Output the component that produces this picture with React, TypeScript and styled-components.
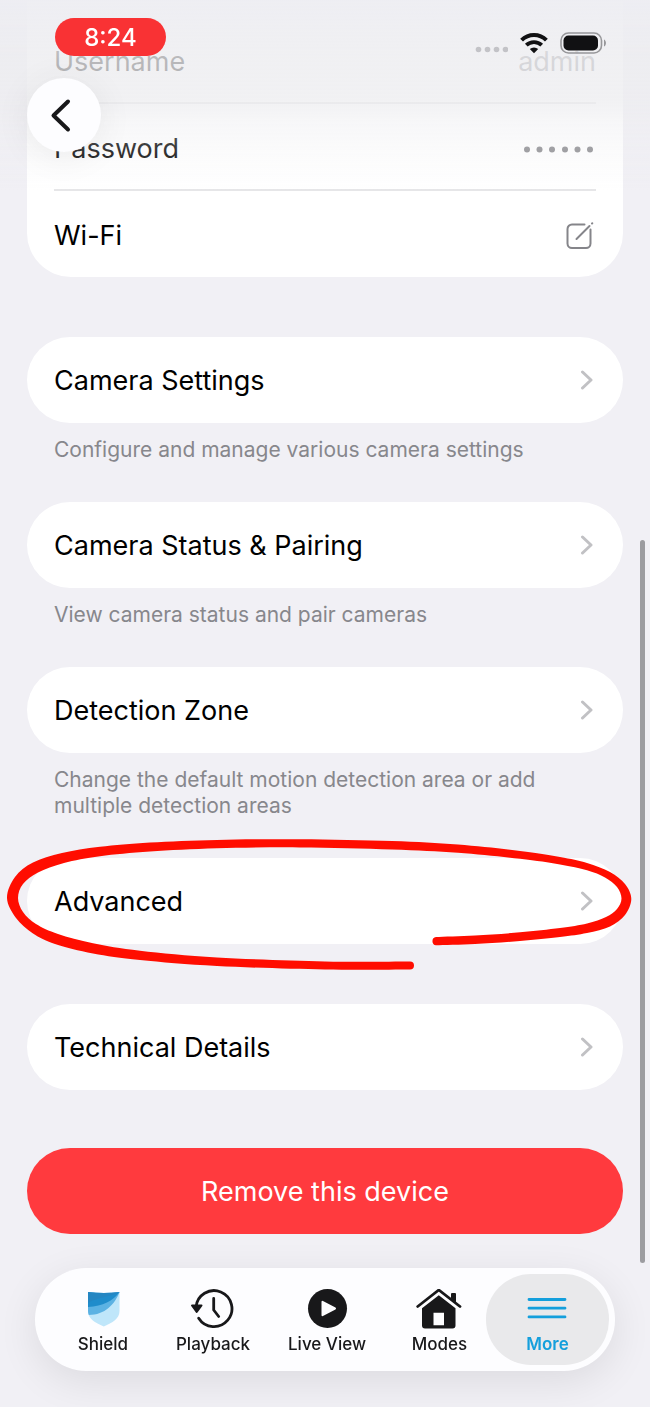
import React from "react";
import styled, { createGlobalStyle } from "styled-components";

const GlobalStyle = createGlobalStyle`
  *, *::before, *::after { box-sizing: border-box; }
  body {
    margin: 0;
    background: #f1f0f5;
    color: #000;
    font-family: Inter, "Liberation Sans", sans-serif;
  }
  a { color: inherit; text-decoration: none; }
  button { font: inherit; border: 0; cursor: pointer; }
`;

const Screen = styled.div`
  position: relative;
  overflow: hidden;
  padding: 0 27px 173px;
`;

const Settings = styled.main`
  display: flex;
  flex-direction: column;
`;

const Card = styled.section`
  background: #fff;
  border-radius: 0 0 44px 44px;
  padding: 17px 27px 0;
  margin-bottom: 60px;
`;

const Row = styled.div<{ $divided?: boolean }>`
  display: flex;
  align-items: center;
  justify-content: space-between;
  height: ${(p) => (p.$divided ? 87 : 86)}px;
  padding-top: 4px;
  border-bottom: ${(p) => (p.$divided ? "2px solid #e6e6e8" : "0")};
  font-size: 27px;
  line-height: 36px;
`;

const Value = styled.span`
  display: flex;
  color: #8a8a8e;
`;

const EditButton = styled.button`
  display: flex;
  padding: 0;
  background: none;
`;

const Item = styled.section<{ $gap: number }>`
  position: relative;
  margin-bottom: ${(p) => p.$gap}px;
`;

const ItemLink = styled.a`
  display: flex;
  align-items: center;
  justify-content: space-between;
  min-height: 86px;
  padding: 2px 27px 0;
  border-radius: 43px;
  background: #fff;
  font-size: 27px;
  line-height: 36px;
`;

const Hint = styled.p`
  margin: 14px 27px 0;
  max-width: 520px;
  color: #87878c;
  font-size: 21px;
  line-height: 26px;
`;

const RemoveButton = styled.button`
  min-height: 86px;
  padding: 2px 27px 0;
  border-radius: 43px;
  background: #ff3a3e;
  color: #fff;
  font-size: 27px;
  line-height: 36px;
`;

const Marker = styled.svg`
  position: absolute;
  top: -23px;
  left: -27px;
  width: calc(100% + 54px);
  height: 140px;
  pointer-events: none;
`;

const TopFade = styled.header`
  position: fixed;
  inset: 0 0 auto;
  height: 190px;
  padding: 18px 43px 0 55px;
  display: flex;
  align-items: flex-start;
  justify-content: space-between;
  pointer-events: none;
  background: linear-gradient(
    rgba(237, 237, 242, 0.94) 0,
    rgba(236, 236, 239, 0.78) 60px,
    rgba(236, 236, 239, 0.74) 100px,
    rgba(236, 236, 239, 0.42) 122px,
    rgba(236, 236, 239, 0.24) 148px,
    rgba(236, 236, 239, 0) 190px
  );
`;

const Clock = styled.time`
  width: 111px;
  padding-top: 2px;
  border-radius: 19px;
  background: #f93234;
  color: #fff;
  font-size: 24px;
  font-weight: 500;
  line-height: 36px;
  text-align: center;
`;

const StatusIcons = styled.div`
  display: flex;
  align-items: center;
  gap: 12px;
  padding-top: 14px;
`;

const BackButton = styled.button`
  position: fixed;
  top: 78px;
  left: 27px;
  width: 74px;
  height: 74px;
  display: grid;
  place-items: center;
  padding: 0 6px 0 0;
  border-radius: 50%;
  background: #fdfdff;
  box-shadow: 0 4px 36px rgba(0, 0, 0, 0.07);
`;

const ScrollThumb = styled.div`
  position: fixed;
  top: 540px;
  right: 5px;
  bottom: 144px;
  width: 5px;
  border-radius: 3px;
  background: #9c9ca0;
`;

const TabBar = styled.nav`
  position: fixed;
  right: 35px;
  bottom: 36px;
  left: 35px;
  display: grid;
  grid-template-columns: 124fr 96fr 132fr 93fr 123fr;
  padding: 6px;
  border-radius: 52px;
  background: #fdfdff;
  box-shadow: 0 10px 40px rgba(0, 0, 0, 0.09);
`;

const Tab = styled.a<{ $active?: boolean }>`
  display: flex;
  flex-direction: column;
  align-items: center;
  gap: 5px;
  padding: 15px 0 11px;
  border-radius: 45px;
  background: ${(p) => (p.$active ? "#e9e9eb" : "transparent")};
  color: ${(p) => (p.$active ? "#149fdc" : "#18181a")};
  font-size: 17px;
  font-weight: ${(p) => (p.$active ? 600 : 500)};
  line-height: 20px;
  white-space: nowrap;
`;

type Point = [number, number];

/* Smooth curve through the given points (Catmull-Rom as cubic Béziers). */
function curve(points: Point[]): string {
  return points
    .slice(0, -1)
    .map((p1, i) => {
      const p0 = points[i - 1] ?? p1;
      const p2 = points[i + 1];
      const p3 = points[i + 2] ?? p2;
      const c1 = [p1[0] + (p2[0] - p0[0]) / 6, p1[1] + (p2[1] - p0[1]) / 6];
      const c2 = [p2[0] - (p3[0] - p1[0]) / 6, p2[1] - (p3[1] - p1[1]) / 6];
      return `C${c1.join(" ")} ${c2.join(" ")} ${p2.join(" ")}`;
    })
    .join("");
}

const outerEdge: Point[] = [
  [410, 134.5], [325, 134.5], [217, 131], [140, 125], [93, 118.5], [55, 109],
  [33, 98.5], [16, 83], [7, 63], [15, 42], [33, 27.5], [62, 18], [100, 11.8],
  [150, 7.500], [217, 4.900], [300, 4.2], [392, 6], [458, 9.6], [520, 16],
  [560, 22], [587, 28], [610, 37], [625, 49], [631.3, 64], [625, 80],
  [610, 91.5], [587, 98], [560, 102], [520, 106], [475, 109], [436, 110.3],
];

const innerEdge: Point[] = [
  [436, 102], [475, 100.500], [520, 97.3], [560, 93], [587, 88.5], [606, 82],
  [617, 74], [621.5, 63.5], [617, 52], [605, 42.5], [587, 35.3], [560, 29.5],
  [520, 23.8], [458, 17.8], [392, 14.4], [300, 12.4], [217, 13.3], [150, 16.6],
  [100, 21.3], [64, 28], [38, 37.5], [23, 49], [18, 63], [23, 77], [36, 89],
  [58, 99], [93, 108.2], [140, 115.7], [217, 122.5], [325, 126.5], [410, 126.5],
];

const markerPath =
  `M${outerEdge[0].join(" ")}${curve(outerEdge)}` +
  `A4.2 4.2 0 0 1 ${innerEdge[0].join(" ")}${curve(innerEdge)}` +
  `A4 4 0 0 1 ${outerEdge[0].join(" ")}Z`;

const HandDrawnCircle = () => (
  <Marker viewBox="0 0 650 140" preserveAspectRatio="none" aria-hidden="true">
    <path d={markerPath} fill="#ff0d00" />
  </Marker>
);

const Chevron = () => (
  <svg width="18" height="22" viewBox="0 0 18 22" fill="none" aria-hidden="true">
    <path d="M4.5 2 13 10l-8.500 8" stroke="#c1c1c4" strokeWidth="3" strokeLinecap="round" strokeLinejoin="round" />
  </svg>
);

const PasswordDots = () => (
  <svg width="72" height="8" viewBox="0 0 72 8" fill="#8a8a8e" role="img" aria-label="Hidden password">
    {[3, 15.5, 28, 41, 53.5, 66].map((x) => (
      <circle key={x} cx={x} cy="4.500" r="3" />
    ))}
  </svg>
);

const EditIcon = () => (
  <svg width="30" height="30" viewBox="0 0 30 30" fill="none" stroke="#85858a" strokeWidth="2" strokeLinecap="round" aria-hidden="true">
    <path d="M18.500 3.500H6A4.500 4.500 0 0 0 1.500 8v14.500A4.500 4.500 0 0 0 6 27h14a4.500 4.500 0 0 0 4.500-4.500V8.500" />
    <path d="M10.500 18 23.500 5" />
    <path d="m26 2.500.300-.300" />
  </svg>
);

const SignalDots = () => (
  <svg width="34" height="22" viewBox="0 0 34 22" fill="#c3c3c7" aria-hidden="true">
    {[5, 14, 23, 32].map((x) => (
      <circle key={x} cx={x - 0.5} cy="17.500" r="2.800" />
    ))}
  </svg>
);

const WifiIcon = () => (
  <svg width="28" height="22" viewBox="0 0 28 22" fill="none" stroke="#111113" aria-hidden="true">
    <path d="M1.600 8.200a17.600 17.600 0 0 1 24.800 0" strokeWidth="4" />
    <path d="M6.300 13.200a11 11 0 0 1 15.400 0" strokeWidth="3.800" />
    <path d="M14 21.200 9.800 17.100a6.200 6.200 0 0 1 8.400 0Z" fill="#111113" stroke="none" />
  </svg>
);

const BatteryIcon = () => (
  <svg width="47" height="22" viewBox="0 0 47 22" aria-hidden="true">
    <rect x="1" y="1" width="40.500" height="20" rx="7.500" fill="none" stroke="#97979a" strokeWidth="1.600" />
    <rect x="3.500" y="3.500" width="34.500" height="15" rx="5" fill="#111113" />
    <path d="M44 7.500c2.600 1 2.600 6 0 7Z" fill="#97979a" />
  </svg>
);

const BackIcon = () => (
  <svg width="24" height="36" viewBox="0 0 24 36" fill="none" aria-hidden="true">
    <path d="M19 4.500 4.500 18.500 19 32.500" stroke="#18181a" strokeWidth="4" strokeLinecap="round" strokeLinejoin="round" />
  </svg>
);

const ShieldIcon = () => (
  <svg width="48" height="40" viewBox="0 0 48 40" aria-hidden="true">
    <path d="M9 3q16 2 31.500 0V22c0 8-7 11.500-15.700 15.500C16 33.500 9 30 9 22Z" fill="#bfe6fa" />
    <path d="M9 3q16 2 31.500 0C36 15 26 26 9.800 26Q9 24 9 22Z" fill="#5cb2e3" />
    <path d="M9 3q16 2 31.500 0C34 12 24 17 9 18Z" fill="#1f8ccb" />
    <path d="M9 3q16 2 31.500 0C31 8 20 7.500 9 14Z" fill="#2b7fb9" opacity=".45" />
  </svg>
);

const PlaybackIcon = () => (
  <svg width="48" height="40" viewBox="0 0 48 40" fill="none" stroke="#18181a" strokeWidth="2.800" strokeLinecap="round" strokeLinejoin="round" aria-hidden="true">
    <path d="M7 18.200A18 18 0 1 1 9.700 29.200" />
    <path d="M3 16.500h9.500l-4.800 6.500Z" fill="#18181a" strokeWidth="2" />
    <path d="M24.700 9.500v11.500l5 6.500" />
  </svg>
);

const PlayIcon = () => (
  <svg width="48" height="40" viewBox="0 0 48 40" aria-hidden="true">
    <circle cx="24.500" cy="19.500" r="19.500" fill="#18181a" />
    <path d="M19.500 12.800v13.400L32 19.500Z" fill="#fdfdff" stroke="#fdfdff" strokeWidth="2" strokeLinejoin="round" />
  </svg>
);

const HouseIcon = () => (
  <svg width="48" height="40" viewBox="0 0 48 40" aria-hidden="true">
    <path d="M1.700 17.500 22.800 1 44 17.500" fill="none" stroke="#18181a" strokeWidth="2.800" strokeLinecap="round" strokeLinejoin="round" />
    <path d="M35 9.500V5a1 1 0 0 1 1-1h3a1 1 0 0 1 1 1v8.500Z" fill="#18181a" />
    <path d="M22.800 6.300 39.500 19.300V36.500a3 3 0 0 1-3 3H9a3 3 0 0 1-3-3V19.300ZM17.500 23.800v12.500h10.500V23.800Z" fill="#18181a" fillRule="evenodd" />
  </svg>
);

const MoreIcon = () => (
  <svg width="48" height="40" viewBox="0 0 48 40" stroke="#149fdc" strokeWidth="2.800" strokeLinecap="round" aria-hidden="true">
    <path d="M5 10.500h36M5 19.200h36M5 27.900h36" />
  </svg>
);

const items = [
  { title: "Camera Settings", hint: "Configure and manage various camera settings", gap: 39 },
  { title: "Camera Status & Pairing", hint: "View camera status and pair cameras", gap: 39 },
  { title: "Detection Zone", hint: "Change the default motion detection area or add multiple detection areas", gap: 39 },
  { title: "Advanced", gap: 60, circled: true },
  { title: "Technical Details", gap: 58 },
];

const tabs = [
  { label: "Shield", Icon: ShieldIcon },
  { label: "Playback", Icon: PlaybackIcon },
  { label: "Live View", Icon: PlayIcon },
  { label: "Modes", Icon: HouseIcon },
  { label: "More", Icon: MoreIcon, active: true },
];

export default function App() {
  return (
    <Screen>
      <GlobalStyle />
      <Settings>
        <Card>
          <Row $divided>
            <span>Username</span>
            <Value>admin</Value>
          </Row>
          <Row $divided>
            <span>Password</span>
            <Value>
              <PasswordDots />
            </Value>
          </Row>
          <Row>
            <span>Wi-Fi</span>
            <EditButton type="button" aria-label="Edit Wi-Fi">
              <EditIcon />
            </EditButton>
          </Row>
        </Card>
        {items.map(({ title, hint, gap, circled }) => (
          <Item key={title} $gap={gap}>
            <ItemLink href="#">
              {title}
              <Chevron />
            </ItemLink>
            {hint && <Hint>{hint}</Hint>}
            {circled && <HandDrawnCircle />}
          </Item>
        ))}
        <RemoveButton type="button">Remove this device</RemoveButton>
      </Settings>
      <TopFade>
        <Clock>8:24</Clock>
        <StatusIcons>
          <SignalDots />
          <WifiIcon />
          <BatteryIcon />
        </StatusIcons>
      </TopFade>
      <BackButton type="button" aria-label="Back">
        <BackIcon />
      </BackButton>
      <ScrollThumb />
      <TabBar>
        {tabs.map(({ label, Icon, active }) => (
          <Tab key={label} href="#" $active={active} aria-current={active ? "page" : undefined}>
            <Icon />
            {label}
          </Tab>
        ))}
      </TabBar>
    </Screen>
  );
}
